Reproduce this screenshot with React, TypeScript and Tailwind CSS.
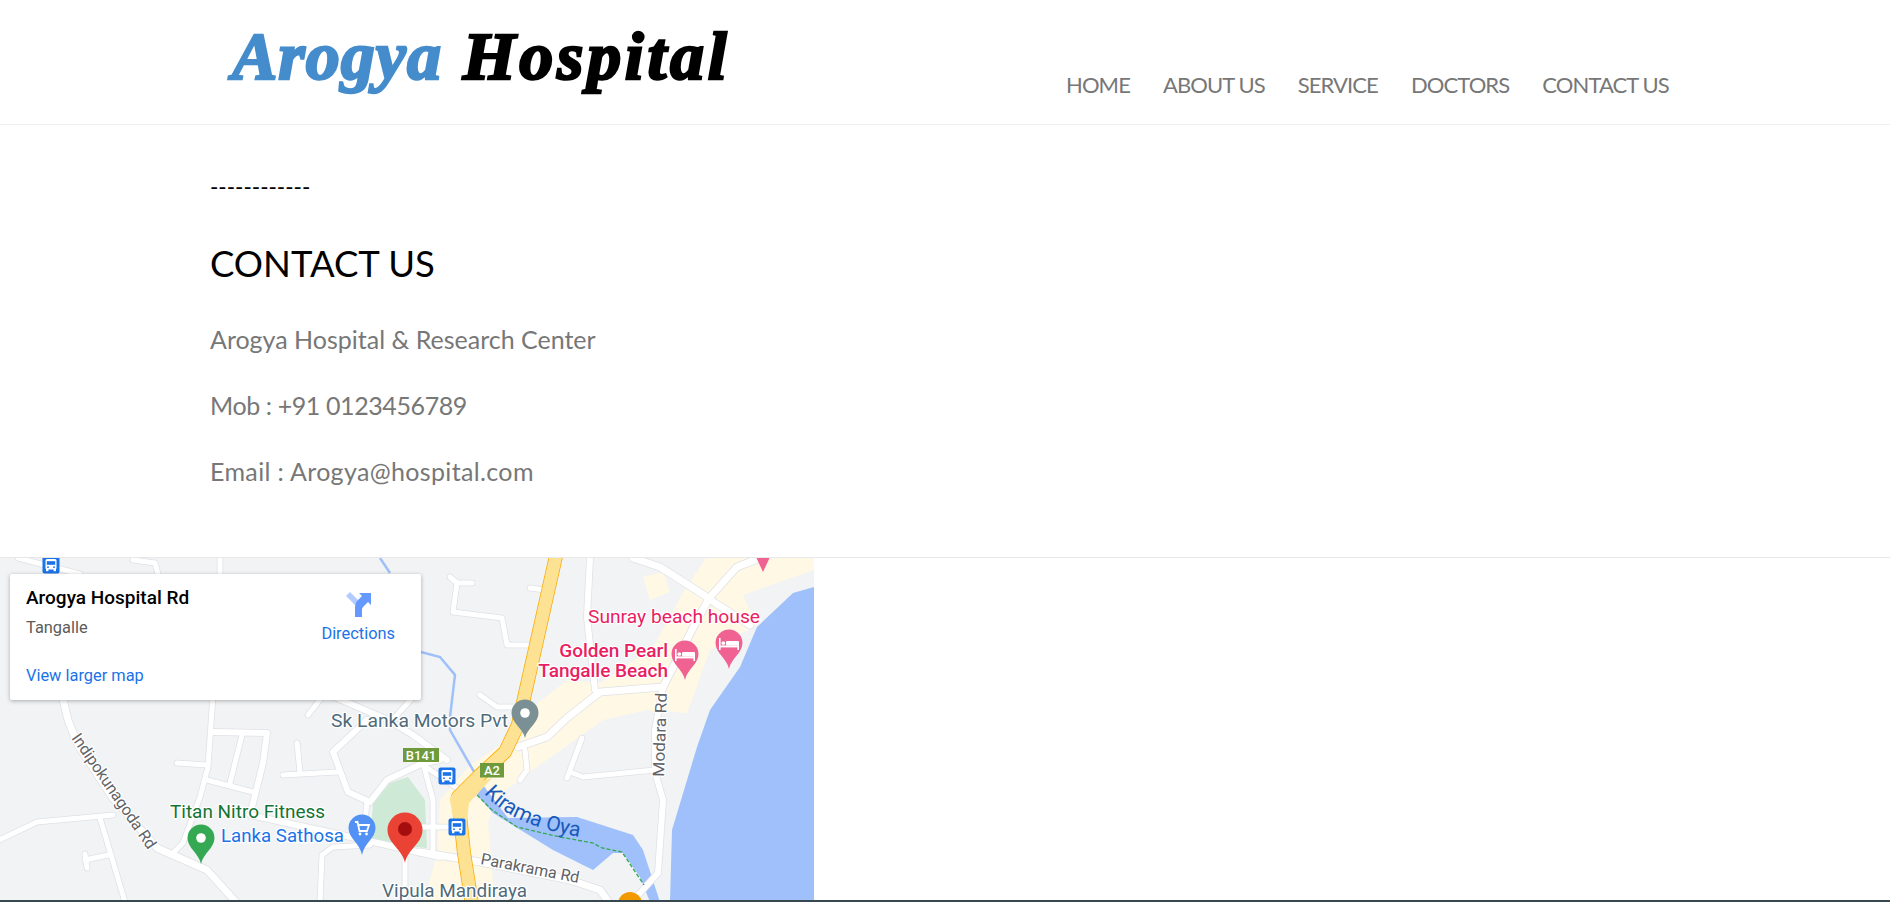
import React from "react";

type Pts = [number, number][];
const toPath = (p: Pts) => "M" + p.map(([x, y]) => `${x} ${y}`).join("L");

const roads: { p: Pts; w?: number }[] = [
  { p: [[62, 695], [68, 720], [78, 745], [112, 797], [157, 848], [207, 870], [236, 902]], w: 7 },
  { p: [[-5, 842], [37, 822], [113, 815]] },
  { p: [[100, 818], [125, 902]] },
  { p: [[108, 855], [85, 860]] },
  { p: [[85, 854], [87, 868]] },
  { p: [[213, 695], [208, 767], [200, 797], [183, 843], [173, 853]] },
  { p: [[213, 732], [267, 733], [263, 763], [250, 815], [333, 833], [440, 857]], w: 6 },
  { p: [[177, 763], [207, 765]] },
  { p: [[207, 780], [253, 792]] },
  { p: [[242, 735], [230, 783]] },
  { p: [[297, 743], [300, 772]] },
  { p: [[283, 775], [337, 772]] },
  { p: [[367, 720], [333, 752], [348, 792], [370, 802], [387, 780], [423, 763], [440, 760]], w: 6 },
  { p: [[367, 802], [363, 843]] },
  { p: [[423, 763], [433, 800], [433, 853]] },
  { p: [[405, 853], [405, 902]] },
  { p: [[330, 695], [388, 720], [413, 735], [447, 760]], w: 6 },
  { p: [[320, 902], [322, 855], [333, 847], [370, 845]] },
  { p: [[420, 827], [452, 827]] },
  { p: [[420, 763], [460, 790]] },
  { p: [[18, 558], [80, 574]] },
  { p: [[133, 560], [155, 563], [158, 574]] },
  { p: [[220, 558], [220, 574]] },
  { p: [[308, 715], [322, 697]] },
  { p: [[413, 697], [390, 723]] },
  { p: [[450, 577], [457, 583], [472, 583]] },
  { p: [[457, 583], [453, 612], [502, 618], [507, 645], [532, 645]] },
  { p: [[530, 588], [545, 590]] },
  { p: [[480, 695], [497, 707], [517, 707]] },
  { p: [[590, 558], [587, 617], [595, 690]], w: 6 },
  { p: [[518, 747], [547, 737], [567, 718], [600, 692], [663, 687]], w: 7 },
  { p: [[663, 687], [697, 620], [710, 597], [737, 567], [765, 556]], w: 7 },
  { p: [[633, 558], [660, 567], [707, 597], [715, 603], [750, 625]], w: 7 },
  { p: [[663, 687], [655, 730], [655, 772], [663, 800], [658, 873], [640, 893], [630, 904]], w: 6 },
  { p: [[525, 750], [527, 770], [520, 780]] },
  { p: [[582, 738], [567, 778]] },
  { p: [[570, 772], [583, 777], [655, 770]] },
  { p: [[420, 852], [480, 862], [570, 880], [600, 890], [610, 904]], w: 7 },
];

function Road({ p, w = 5 }: { p: Pts; w?: number }) {
  return <path d={toPath(p)} fill="none" stroke="#dfe1e5" strokeWidth={w + 1.5} strokeLinejoin="round" strokeLinecap="round" />;
}
function RoadFill({ p, w = 5 }: { p: Pts; w?: number }) {
  return <path d={toPath(p)} fill="none" stroke="#ffffff" strokeWidth={w} strokeLinejoin="round" strokeLinecap="round" />;
}

function Pin({ cx, cy, r, tip, fill }: { cx: number; cy: number; r: number; tip: number; fill: string }) {
  const d = `M${cx} ${tip}C${cx - 2} ${cy + r * 1.15} ${cx - r} ${cy + r * 0.75} ${cx - r} ${cy}A${r} ${r} 0 1 1 ${cx + r} ${cy}C${cx + r} ${cy + r * 0.75} ${cx + 2} ${cy + r * 1.15} ${cx} ${tip}Z`;
  return <path d={d} fill={fill} />;
}

function Bed({ x, y }: { x: number; y: number }) {
  return (
    <g transform={`translate(${x} ${y})`} fill="#fff">
      <rect x="-10" y="-6" width="1.6" height="12" />
      <rect x="8.4" y="-2" width="1.6" height="8" />
      <rect x="-10" y="1.4" width="20" height="2" />
      <rect x="-3" y="-3" width="13" height="4.6" rx="1" />
      <rect x="-7.5" y="-2.6" width="3.6" height="3.4" rx="1.4" />
    </g>
  );
}

function Bus({ x, y }: { x: number; y: number }) {
  return (
    <g transform={`translate(${x} ${y})`}>
      <rect x="-8.5" y="-8.5" width="17" height="17" rx="2" fill="#1a73e8" />
      <rect x="-5.5" y="-6" width="11" height="10.5" rx="1.5" fill="#fff" />
      <rect x="-4.2" y="-3.8" width="8.4" height="3.6" fill="#1a73e8" />
      <rect x="-5" y="4" width="2.4" height="2.2" fill="#fff" />
      <rect x="2.6" y="4" width="2.4" height="2.2" fill="#fff" />
      <circle cx="-3" cy="2.2" r="0.9" fill="#1a73e8" />
      <circle cx="3" cy="2.2" r="0.9" fill="#1a73e8" />
    </g>
  );
}

function Label({ x, y, len, children, fill, size = 18, weight = 400, anchor = "start", rotate }: { x: number; y: number; len?: number; children: string; fill: string; size?: number; weight?: number; anchor?: "start" | "end"; rotate?: number }) {
  return (
    <text
      x={x}
      y={y}
      fill={fill}
      stroke="#fff"
      strokeWidth={2.5}
      strokeLinejoin="round"
      paintOrder="stroke"
      fontSize={size}
      fontWeight={weight}
      textAnchor={anchor}
      textLength={len}
      lengthAdjust={len ? "spacingAndGlyphs" : undefined}
      transform={rotate !== undefined ? `rotate(${rotate} ${x} ${y})` : undefined}
    >
      {children}
    </text>
  );
}

function MapArt() {
  return (
    <svg viewBox="0 558 814 342" className="absolute inset-0 h-full w-full font-['Roboto',sans-serif]" aria-hidden="true">
      <rect x="0" y="558" width="814" height="342" fill="#f1f3f4" />
      <path d="M707 556L814 556L814 570L743 595L757 625L710 650L687 713L647 710L603 720L530 772L497 797L488 823L495 902L424 902L437 853L440 800L470 765L523 730L533 707L567 680L600 683L653 647L683 593Z" fill="#fff8e5" />
      <path d="M643 577L663 572L670 592L650 600Z" fill="#fff8e5" />
      <path d="M373 803L390 783L408 777L425 800L427 848L370 843Z" fill="#ceead6" />
      <path d="M814 587L793 593L757 627L740 667L710 710L697 747L672 830L670 902L814 902Z" fill="#9fc0fa" />
      <path d="M477 795L483 785L508 818L577 817L633 835L643 850L660 902L650 902L640 877L623 853L613 853L593 870L553 850L493 813Z" fill="#9fc0fa" />
      <path d="M380 558L390 573M421 652L440 657L455 675L450 717L450 730L477 777" fill="none" stroke="#9fc0fa" strokeWidth={2.5} />
      {roads.map((r, i) => <Road key={i} {...r} />)}
      {roads.map((r, i) => <RoadFill key={i} {...r} />)}
      <path d="M556 556L518 725L505 752L480 775L458 797L464 853L472 904" fill="none" stroke="#f9ab00" strokeWidth={14} strokeLinejoin="round" />
      <path d="M556 556L518 725L505 752L480 775L458 797L464 853L472 904" fill="none" stroke="#fde293" strokeWidth={12.5} strokeLinejoin="round" />
      <path d="M449.5 798L459 788L492 778L469 803L466 830L456 830Z" fill="#fde293" />
      <path d="M477 795L492 810L517 827L560 837L593 843L602 848L622 852L644 885" fill="none" stroke="#34a853" strokeWidth={1.3} strokeDasharray="4 2" />

      <Label x={331} y={727} len={177} fill="#4f6b7a">Sk Lanka Motors Pvt</Label>
      <Label x={588} y={623} len={172} fill="#e91e63">Sunray beach house</Label>
      <Label x={668} y={657} anchor="end" weight={500} size={19} fill="#e91e63">Golden Pearl</Label>
      <Label x={668} y={677} anchor="end" weight={500} size={19} fill="#e91e63">Tangalle Beach</Label>
      <Label x={170} y={818} len={155} fill="#137333">Titan Nitro Fitness</Label>
      <Label x={221} y={842} len={123} fill="#1a73e8">Lanka Sathosa</Label>
      <Label x={382} y={897} len={145} fill="#4f6b7a">Vipula Mandiraya</Label>
      <Label x={664} y={777} size={16} len={84} rotate={-88} fill="#5f6368">Modara Rd</Label>
      <Label x={71} y={738} size={16} len={136} rotate={55.5} fill="#5f6368">Indipokunagoda Rd</Label>
      <Label x={480} y={864} size={16} len={100} rotate={11} fill="#5f6368">Parakrama Rd</Label>
      <path id="kirama" d="M484 793Q510 826 586 838" fill="none" />
      <text fontSize={21} fill="#185abc">
        <textPath href="#kirama">Kirama Oya</textPath>
      </text>

      <Pin cx={201} cy={838} r={13.5} tip={864} fill="#34a853" />
      <circle cx={201} cy={838} r={4.8} fill="#fff" />
      <Pin cx={362} cy={828} r={13.5} tip={855} fill="#5491f5" />
      <path d="M355 822H357.5L359.5 831H367L369 825H358.2" fill="none" stroke="#fff" strokeWidth={1.8} />
      <circle cx={360} cy={834} r={1.4} fill="#fff" />
      <circle cx={366.5} cy={834} r={1.4} fill="#fff" />
      <Pin cx={525} cy={713} r={13.5} tip={738} fill="#7b9095" />
      <circle cx={525} cy={713} r={4.8} fill="#fff" />
      <Pin cx={685} cy={654} r={13.5} tip={680} fill="#f06292" />
      <Bed x={685} y={655} />
      <Pin cx={729} cy={643} r={13.5} tip={669} fill="#f06292" />
      <Bed x={729} y={644} />
      <path d="M756 557L770 557L763 572Z" fill="#f06292" />
      <circle cx={630} cy={904} r={12} fill="#f29900" />
      <Pin cx={405} cy={830} r={17.5} tip={863} fill="#ea4335" />
      <circle cx={405} cy={829} r={7} fill="#a50e0e" />

      <Bus x={51} y={565} />
      <Bus x={447} y={776} />
      <Bus x={457} y={827} />

      <rect x="403" y="748" width="36" height="14" fill="#6f9a3b" />
      <text x="421" y="759.5" fontSize={13} fontWeight={500} fill="#fff" textAnchor="middle">B141</text>
      <rect x="480" y="763" width="24" height="14.5" fill="#6f9a3b" />
      <text x="492" y="775" fontSize={13} fontWeight={500} fill="#fff" textAnchor="middle">A2</text>
    </svg>
  );
}

function MapCard() {
  return (
    <div className="absolute left-[10px] top-[16px] flex h-[126px] w-[411px] justify-between rounded-[2px] bg-white pl-4 pr-[26px] shadow-[0_1px_4px_rgba(0,0,0,0.3)] font-['Roboto',sans-serif]">
      <div className="flex flex-col">
        <div className="mt-[13px] text-[19px] font-medium leading-[22px] text-black">Arogya Hospital Rd</div>
        <div className="mt-[9px] text-[16.4px] leading-[20px] text-[#5b5b5b]">Tangalle</div>
        <a className="mt-[28px] text-[16.4px] leading-[20px] text-[#1a73e8]">View larger map</a>
      </div>
      <div className="flex flex-col items-center">
        <svg viewBox="0 0 26 26" className="mt-[17px] h-[26px] w-[26px]" aria-hidden="true">
          <path d="M1 5L5 1L14 10L10 14Z" fill="#b3ccff" />
          <path d="M10 26V15.5C10 12 12 10 14 8L17 5L14 2H26V14L23 11L20 14C17.5 16.5 17 17 17 19V26Z" fill="#6699ff" />
        </svg>
        <div className="mt-[7px] text-[16.4px] leading-[20px] text-[#1a73e8]">Directions</div>
      </div>
    </div>
  );
}

export default function App() {
  const nav = ["HOME", "ABOUT US", "SERVICE", "DOCTORS", "CONTACT US"];
  return (
    <div className="flex h-[902px] w-full flex-col overflow-hidden bg-white font-['Lato',sans-serif]">
      <header className="relative flex h-[125px] shrink-0 items-start border-b border-[#eeeeee] pl-[232px]">
        <div className="mt-[16px] text-[68px] font-bold italic leading-[80px] whitespace-pre font-['Liberation_Serif',serif] [-webkit-text-stroke:2.5px_currentColor]">
          <span className="tracking-[1px] text-[#448ccb]">Arogya</span>
          <span className="tracking-[3.7px] text-black"> Hospital</span>
        </div>
        <nav className="absolute left-[1066px] top-[70px] flex gap-[33px] text-[22px] leading-[30px] tracking-[-0.9px] text-[#777777]">
          {nav.map((n) => (
            <a key={n} className="whitespace-nowrap">{n}</a>
          ))}
        </nav>
      </header>
      <main className="h-[433px] shrink-0 border-b border-[#e8e8e8] pl-[210px]">
        <p className="mt-[47px] text-[22.5px] leading-[30px] text-black">------------</p>
        <h1 className="mt-[37px] text-[36.5px] font-normal leading-[48px] text-black">CONTACT US</h1>
        <p className="mt-[36px] text-[25px] leading-[32px] text-[#777777]">Arogya Hospital &amp; Research Center</p>
        <p className="mt-[34px] text-[25px] leading-[32px] tracking-[-0.4px] text-[#777777]">Mob : +91 0123456789</p>
        <p className="mt-[34px] text-[25px] leading-[32px] tracking-[0.35px] text-[#777777]">Email : Arogya@hospital.com</p>
      </main>
      <section className="relative h-[342px] w-[814px] shrink-0">
        <MapArt />
        <MapCard />
      </section>
      <div className="h-[2px] shrink-0 bg-[#37474f]" />
    </div>
  );
}
